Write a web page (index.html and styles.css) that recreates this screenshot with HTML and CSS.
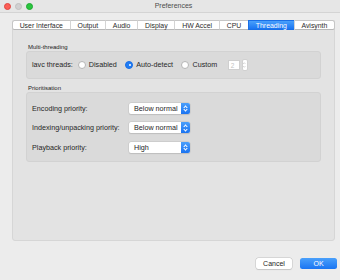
FILE: index.html
```html
<!DOCTYPE html>
<html lang="en">
<head>
    <meta charset="UTF-8">
    <title>Preferences</title>
    <link rel="stylesheet" href="styles.css">
</head>
<body>
    <div class="window">
        <div class="titlebar">
            <div class="lights">
                <span class="light close"></span>
                <span class="light mini"></span>
                <span class="light zoom"></span>
            </div>
            <div class="title">Preferences</div>
        </div>

        <div class="tabview">
            <div class="tabs">
                <div class="tab">User Interface</div>
                <div class="tab">Output</div>
                <div class="tab">Audio</div>
                <div class="tab">Display</div>
                <div class="tab">HW Accel</div>
                <div class="tab">CPU</div>
                <div class="tab active">Threading</div>
                <div class="tab">Avisynth</div>
            </div>

            <div class="panel">
                <div class="group-label">Multi-threading</div>
                <div class="group threads">
                    <span class="row-label">lavc threads:</span>
                    <label class="radio"><span class="dot"></span>Disabled</label>
                    <label class="radio"><span class="dot checked"></span>Auto-detect</label>
                    <label class="radio"><span class="dot"></span>Custom</label>
                    <span class="spin">2</span>
                    <span class="stepper">
                        <svg width="6" height="12" viewBox="0 0 6 12">
                            <path d="M1.5 4.5 L3 3 L4.5 4.5 M1.5 7.5 L3 9 L4.5 7.5" fill="none" stroke="#b4b4b4" stroke-width="0.8"/>
                        </svg>
                    </span>
                </div>

                <div class="group-label second">Prioritisation</div>
                <div class="group priorities">
                    <div class="row">
                        <span class="prio-label">Encoding priority:</span>
                        <span class="popup">Below normal<span class="arrows"></span></span>
                    </div>
                    <div class="row">
                        <span class="prio-label">Indexing/unpacking priority:</span>
                        <span class="popup">Below normal<span class="arrows"></span></span>
                    </div>
                    <div class="row">
                        <span class="prio-label">Playback priority:</span>
                        <span class="popup">High<span class="arrows"></span></span>
                    </div>
                </div>
            </div>
        </div>

        <div class="footer">
            <button class="btn cancel">Cancel</button>
            <button class="btn ok">OK</button>
        </div>
    </div>
</body>
</html>
```

FILE: styles.css
```css
body {
    margin: 0;
    padding: 0;
    width: 340px;
    height: 280px;
    overflow: hidden;
    font-family: 'Liberation Sans', Arial, sans-serif;
    color: #262626;
}

.window {
    width: 347px;
    height: 280px;
    background-color: #ececec;
}

.titlebar {
    height: 12px;
    background-color: #e6e6e6;
    border-bottom: 1px solid #d4d4d4;
    position: relative;
    display: flex;
    align-items: center;
    justify-content: center;
}

.lights {
    position: absolute;
    left: 3.5px;
    top: 2.5px;
    display: flex;
    gap: 4px;
}

.light {
    width: 7px;
    height: 7px;
    border-radius: 50%;
    box-sizing: border-box;
}

.close { background-color: #fc5f57; border: 0.5px solid #e0443e; }
.mini { background-color: #d1d0d1; border: 0.5px solid #c0c0c0; }
.zoom { background-color: #2ac63f; border: 0.5px solid #1ea931; }

.title {
    font-size: 7px;
    color: #4d4d4d;
    line-height: 12px;
}

.tabview {
    margin: 7px 12px 0 12px;
    position: relative;
}

.tabs {
    display: flex;
    justify-content: center;
    position: relative;
    z-index: 1;
    height: 10px;
}

.tab {
    flex-shrink: 0;
    white-space: nowrap;
    font-size: 6.9px;
    line-height: 10px;
    height: 10px;
    box-sizing: border-box;
    padding: 0 6.8px;
    background-color: #fff;
    border-top: 0.5px solid #c6c6c6;
    border-bottom: 0.5px solid #b8b8b8;
    border-left: 0.5px solid #d4d4d4;
    color: #2b2b2b;
}

.tab:first-child {
    border-left: 0.5px solid #c6c6c6;
    border-radius: 2.5px 0 0 2.5px;
}

.tab:last-child {
    border-right: 0.5px solid #c6c6c6;
    border-radius: 0 2.5px 2.5px 0;
}

.tab.active {
    background: linear-gradient(#4aa0fb, #1a75f2);
    color: #fff;
    border-color: #1a6fe6;
}

.panel {
    margin-top: -5px;
    height: 216px;
    box-sizing: border-box;
    background-color: #e3e3e3;
    border: 0.5px solid #d6d6d6;
    border-radius: 3px;
    padding: 16.5px 13px 0 13px;
}

.group-label {
    font-size: 6px;
    line-height: 8px;
    padding-left: 2px;
    color: #222;
}

.group-label.second {
    margin-top: 5px;
}

.group {
    background-color: #dadada;
    border: 0.5px solid #d2d2d2;
    border-radius: 3px;
    box-sizing: border-box;
}

.threads {
    height: 28px;
    display: flex;
    align-items: center;
    padding-left: 5px;
    font-size: 7.2px;
}

.row-label {
    margin-right: 5px;
}

.radio {
    display: flex;
    align-items: center;
    margin-right: 8.5px;
}

.dot {
    width: 8px;
    height: 8px;
    box-sizing: border-box;
    border-radius: 50%;
    background-color: #fff;
    border: 0.5px solid #b5b5b5;
    margin-right: 3px;
}

.dot.checked {
    background-color: #1f7cf4;
    border-color: #1a6fe6;
    position: relative;
}

.dot.checked::after {
    content: "";
    position: absolute;
    left: 2.3px;
    top: 2.3px;
    width: 2.5px;
    height: 2.5px;
    border-radius: 50%;
    background-color: #fff;
}

.spin {
    width: 12px;
    height: 10px;
    box-sizing: border-box;
    background-color: #fff;
    border: 0.5px solid #cfcfcf;
    font-size: 6.5px;
    line-height: 9px;
    color: #c4c4c4;
    padding-left: 2px;
    margin-left: 2px;
}

.stepper {
    width: 6px;
    height: 12px;
    margin-left: 2px;
    background-color: #fff;
    border: 0.5px solid #d0d0d0;
    border-radius: 2px;
    box-sizing: border-box;
    display: flex;
}

.stepper svg {
    margin-left: -0.5px;
    margin-top: -0.5px;
}

.priorities {
    height: 70px;
    padding: 6px 0 0 5px;
    font-size: 7.2px;
}

.row {
    height: 19.5px;
    display: flex;
    align-items: center;
}

.prio-label {
    width: 97px;
}

.popup {
    width: 61px;
    height: 11px;
    box-sizing: border-box;
    background-color: #fff;
    border-radius: 2px;
    box-shadow: 0 0 0 0.5px #c4c4c4, 0 0.5px 1px rgba(0, 0, 0, 0.15);
    font-size: 7.2px;
    line-height: 11px;
    padding-left: 5px;
    position: relative;
    color: #1e1e1e;
}

.arrows {
    position: absolute;
    right: 0;
    top: 0;
    width: 9px;
    height: 11px;
    border-radius: 0 2px 2px 0;
    background: linear-gradient(#4a9ffb, #1a73f1);
}

.arrows::before,
.arrows::after {
    content: "";
    position: absolute;
    left: 3px;
    width: 2px;
    height: 2px;
    border-left: 0.8px solid #fff;
    border-top: 0.8px solid #fff;
}

.arrows::before {
    top: 3px;
    transform: rotate(45deg);
}

.arrows::after {
    top: 5.5px;
    transform: rotate(225deg);
}

.footer {
    display: flex;
    justify-content: flex-end;
    gap: 8px;
    padding: 17px 10px 0 0;
}

.btn {
    font-family: 'Liberation Sans', Arial, sans-serif;
    font-size: 7px;
    height: 11px;
    line-height: 11px;
    padding: 0;
    border: none;
    border-radius: 2.5px;
}

.cancel {
    width: 36px;
    background-color: #fff;
    color: #262626;
    box-shadow: 0 0 0 0.5px #c4c4c4, 0 0.5px 1px rgba(0, 0, 0, 0.15);
}

.ok {
    width: 37px;
    background: linear-gradient(#4aa0fb, #1a75f2);
    color: #fff;
}
```
